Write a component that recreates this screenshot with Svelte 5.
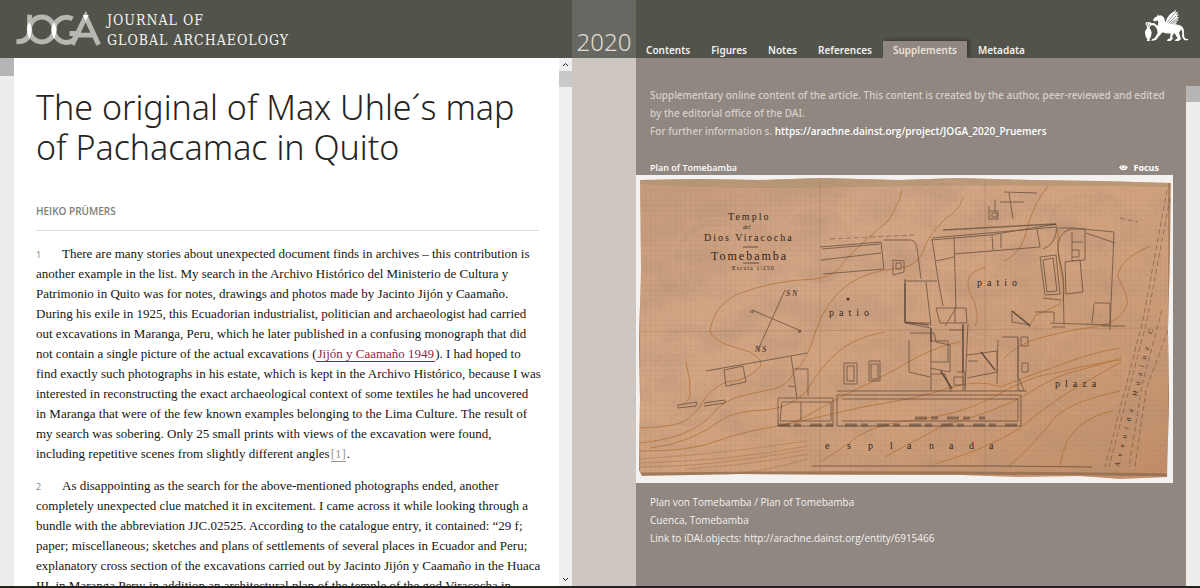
<script>
  const tabs = ['Contents', 'Figures', 'Notes', 'References', 'Supplements', 'Metadata'];
  let active = $state('Supplements');

  const first = [
    'There are many stories about unexpected document finds in archives – this contribution is',
    'another example in the list. My search in the Archivo Histórico del Ministerio de Cultura y',
    'Patrimonio in Quito was for notes, drawings and photos made by Jacinto Jijón y Caamaño.',
    'During his exile in 1925, this Ecuadorian industrialist, politician and archaeologist had carried',
    'out excavations in Maranga, Peru, which he later published in a confusing monograph that did'
  ];
  const middle = [
    'find exactly such photographs in his estate, which is kept in the Archivo Histórico, because I was',
    'interested in reconstructing the exact archaeological context of some textiles he had uncovered',
    'in Maranga that were of the few known examples belonging to the Lima Culture. The result of',
    'my search was sobering. Only 25 small prints with views of the excavation were found,'
  ];
  const second = [
    'As disappointing as the search for the above-mentioned photographs ended, another',
    'completely unexpected clue matched it in excitement. I came across it while looking through a',
    'bundle with the abbreviation JJC.02525. According to the catalogue entry, it contained: “29 f;',
    'paper; miscellaneous; sketches and plans of settlements of several places in Ecuador and Peru;',
    'explanatory cross section of the excavations carried out by Jacinto Jijón y Caamaño in the Huaca',
    'III, in Maranga Peru; in addition an architectural plan of the temple of the god Viracocha in'
  ];

  const contours = [
    'M710 330 Q714 305 738 294 Q775 280 815 279 Q838 276 845 260 Q870 235 887 222 Q899 205 902 190',
    'M710 330 Q712 340 728 345 L750 352 Q768 362 757 370 Q745 381 726 382 Q712 388 704 400 Q692 422 673 425 Q655 428 639 428',
    'M816 330 Q826 300 850 283 Q868 272 892 269 Q920 268 925 246 Q934 226 953 213 Q961 206 963 198',
    'M816 330 Q808 360 794 372 Q788 386 773 389 L745 395 Q722 400 712 415 Q690 438 640 443',
    'M639 451 Q690 452 720 440 Q750 430 773 427 Q800 422 817 410 Q845 394 870 383 Q895 370 921 355 Q945 344 960 342',
    'M885 332 Q855 337 838 352 Q820 367 806 392 Q790 408 765 410 Q735 411 723 419 Q690 444 650 448',
    'M780 426 Q840 412 867 406 Q920 398 945 389 Q980 378 1000 387 Q1030 375 1060 365 Q1090 353 1120 348',
    'M820 462 Q843 448 858 436 Q882 422 916 420 Q960 414 990 399 Q1030 375 1060 372 Q1085 365 1121 360',
    'M885 457 Q925 435 945 425 Q1000 410 1025 395 Q1060 373 1080 370 Q1105 363 1121 358',
    'M935 464 Q1003 444 1030 420 Q1056 400 1072 390 L1121 362',
    'M1008 467 Q1032 447 1056 416 Q1075 400 1120 391',
    'M1060 465 Q1065 436 1080 426 Q1095 414 1113 411',
    'M1004 261 Q1020 254 1025 236 Q1032 205 1048 186',
    'M1150 246 Q1118 260 1118 277 Q1130 300 1127 305 Q1121 321 1100 326 Q1040 335 1024 344 Q1007 353 1004 359',
    'M986 267 Q970 271 968 280 Q967 290 974 301 Q980 320 975 326',
    'M1058 230 Q1057 260 1063 280 Q1067 300 1058 305 L1035 316 L1029 328',
    'M686 362 Q691 380 690 397 Q688 402 682 405'
  ];
  const fineContours = [
    'M640 459 Q730 453 806 441', 'M640 463 Q730 461 808 446', 'M685 469 Q750 465 808 454',
    'M720 475 Q760 473 808 459', 'M640 467 Q710 467 805 450'
  ];
</script>

<div class="page">
  <header>
    <a class="brand" href="/" aria-label="Journal of Global Archaeology">
      <svg class="joga" viewBox="0 0 258 94" aria-hidden="true">
        <g fill="none" stroke="#b7b7b1" stroke-width="15">
          <path d="M40 2V52Q39 84 0 84" />
          <circle cx="77" cy="47" r="38" />
          <path d="M170 15A38 38 0 1 0 164 84Q175 81 185 59H161" />
          <path d="M169 93L210 8L249 93M185 64H233" />
        </g>
        <path d="M38 24Q47 36 46 48Q46 62 39 75Q32 60 32 47Q32 34 38 24ZM114 24Q121 37 121 48Q121 62 114 76Q106 60 106 48Q106 36 114 24ZM201 3H219L210 21Z" fill="#fff" />
      </svg>
      <span class="brand-name">JOURNAL OF<br />GLOBAL ARCHAEOLOGY</span>
    </a>
    <div class="year">2020</div>
    <div class="bar">
      <nav>
        {#each tabs as tab}
          <button class:active={active === tab} onclick={() => (active = tab)}>{tab}</button>
        {/each}
      </nav>
      <svg class="griffin" viewBox="0 0 180 132" aria-hidden="true">
        <g fill="#fff">
          <path d="M29 55H45L44 62Q40 66 41 73Q49 82 46 93Q44 102 40 106L42 111H32L34 106Q28 99 27 88Q27 79 33 73Q34 67 29 62Z" />
          <path d="M51 47Q55 39 65 36L64 31L70 35L75 34Q86 39 87 52Q92 59 99 57L118 61Q134 63 140 70Q146 78 144 90Q143 99 149 104L156 105V109H146Q136 101 139 91Q140 80 135 76Q134 82 129 86L135 105L128 111H117L118 107L125 103L115 87L109 95L110 106L103 111H93L95 106L102 103L104 88Q91 90 80 85L70 95L60 108L46 111L48 106L56 102L65 87L63 76L56 65L47 63L38 72L32 69L43 57L56 58L64 66L67 58L65 49L58 52L53 51Z" />
          <path d="M89 57Q92 38 104 29L121 17L117 27L127 23L120 34L129 30L122 40L129 39L123 47L128 48L119 54L124 56L114 61L99 74Q89 73 89 57Z" />
        </g>
        <path d="M94 55L116 28M98 58L120 36M103 59L123 43M108 60L122 50M35 57Q31 60 34 67M42 59L38 67" fill="none" stroke="#52534a" stroke-width="2" />
      </svg>
    </div>
  </header>

  <main>
    <div class="edge left"><i></i></div>
    <article>
      <div class="text">
        <h1>The original of Max Uhle´s map<br />of Pachacamac in Quito</h1>
        <p class="author">HEIKO PRÜMERS</p>
        <p class="para">
          <span class="num">1</span>{#each first as line}{line}<br />{/each}not contain a single picture of the actual excavations (<a class="cite" href="#jijon">Jijón y Caamaño 1949</a>). I had hoped to<br />{#each middle as line}{line}<br />{/each}including repetitive scenes from slightly different angles<a class="note" href="#note-1">[1]</a>.
        </p>
        <p class="para">
          <span class="num">2</span>{#each second as line}{line}<br />{/each}
        </p>
      </div>
      <div class="scroll" aria-hidden="true">
        <svg viewBox="0 0 13 13"><path d="M4 8L6.500 5.500L9 8" /></svg>
        <i></i>
        <svg class="down" viewBox="0 0 13 13"><path d="M4 5L6.500 7.500L9 5" /></svg>
      </div>
    </article>
    <div class="gutter"></div>
    <aside>
      <p class="intro">
        Supplementary online content of the article. This content is created by the author, peer-reviewed and edited by the editorial office of the DAI.<br />For further information s. <a href="https://arachne.dainst.org/project/JOGA_2020_Pruemers">https://arachne.dainst.org/project/JOGA_2020_Pruemers</a>
      </p>
      <div class="plan-head">
        <h2>Plan of Tomebamba</h2>
        <button>
          <svg viewBox="0 0 20 14" aria-hidden="true"><path d="M0 7Q4 1 10 1T20 7Q16 13 10 13T0 7Z" fill="#fff" /><circle cx="10" cy="6" r="4" fill="none" stroke="#8f8780" stroke-width="1.500" /></svg>Focus
        </button>
      </div>
      <svg class="map" viewBox="636 175 537 308" role="img" aria-label="Plan of Tomebamba">
        <defs>
          <linearGradient id="paper" x1="0" y1="0" x2="1" y2="1">
            <stop offset="0" stop-color="#c39a7b" />
            <stop offset=".3" stop-color="#d2a685" />
            <stop offset=".65" stop-color="#cf9f7b" />
            <stop offset="1" stop-color="#c08c67" />
          </linearGradient>
          <pattern id="grid" width="5" height="5" patternUnits="userSpaceOnUse">
            <path d="M0 0H5M0 0V5" stroke="#8a5a40" stroke-width=".5" opacity=".24" />
          </pattern>
          <filter id="grain" x="0" y="0" width="100%" height="100%">
            <feTurbulence type="fractalNoise" baseFrequency=".025 .04" numOctaves="5" seed="8" />
            <feColorMatrix values="0 0 0 0 .45  0 0 0 0 .28  0 0 0 0 .18  .9 0 0 0 -.32" />
          </filter>
          <clipPath id="sheet">
            <path d="M640 180L700 179L760 180L820 178L900 180L960 178L1030 180L1100 181L1171 183L1170 250L1168 330L1169 400L1167 477L1120 479L1080 476L1020 477L960 475L850 475L740 474L642 476L639 470L640 400L639 340L641 270Z" />
          </clipPath>
        </defs>
        <rect x="636" y="175" width="537" height="308" fill="#f4f2f1" />
        <g clip-path="url(#sheet)">
          <rect x="636" y="175" width="537" height="308" fill="url(#paper)" />
          <rect x="636" y="175" width="537" height="308" filter="url(#grain)" />
          <rect x="636" y="187" width="537" height="285" fill="url(#grid)" />
          <path d="M636 175H1173V187Q1000 184 860 187T636 184Z" fill="#b09373" opacity=".7" />
          <path d="M638 474Q800 472 960 473T1170 475" fill="none" stroke="#806044" stroke-width="3" opacity=".6" />
          <path d="M639 178V475M1169 183V478" stroke="#8b6a4d" stroke-width="2" opacity=".5" />
          <path d="M820 180V476M985 180V476M640 332L1168 328" stroke="#9a7358" stroke-width="1" opacity=".35" />
          <g fill="none" stroke="#e3bb99" stroke-width="2" opacity=".14">
            <circle cx="715" cy="260" r="42" /><circle cx="715" cy="260" r="32" />
            <circle cx="818" cy="245" r="40" /><circle cx="950" cy="225" r="44" />
            <circle cx="1082" cy="230" r="38" /><circle cx="1082" cy="230" r="30" />
            <circle cx="686" cy="385" r="43" /><circle cx="686" cy="385" r="34" />
            <circle cx="1085" cy="372" r="42" /><circle cx="970" cy="375" r="40" />
          </g>
          <g fill="none" stroke="#aa6425" stroke-width="1" opacity=".6">
            {#each contours as d}<path {d} />{/each}
          </g>
          <g fill="none" stroke="#a56c3a" stroke-width=".7" opacity=".6">
            {#each fineContours as d}<path {d} />{/each}
          </g>
          <g fill="none" stroke="#4d3b2e" stroke-width="1" opacity=".62">
            <path d="M820 247L881 242L884 269L823 274M821 260L881 253M822 249L880 244M884 240H911Q916 241 917 248L921 279M904 281H937M893 260L904 261V272L893 275ZM896 263H901V269H896Z" />
            <path d="M931 240L990 235L1057 224M932 239L938 279L943 306M954 237L956 308L945 326M954 254L1040 247M936 261L954 257M992 235L993 250M1001 234V248M1037 229L1040 247M1057 226Q1056 245 1043 249M932 238L1056 227" />
            <path d="M1058 228H1073L1114 232L1110 330M1070 229H1085V260L1072 261V232M1072 242H1083M1086 233L1115 243M1072 250H1079V257H1072M1040 257L1056 255L1060 294L1045 295ZM1043 260L1053 258L1057 291L1047 292ZM1065 262L1080 260L1083 292L1066 294ZM1070 229Q1056 234 1058 252L1063 275L1064 325M1043 298L1061 300M1094 303H1110M1094 304L1092 323M1110 303V325L1050 323M1012 311L1030 325L1012 322ZM1035 312H1054V322" />
            <path d="M905 279V323H930M926 282L931 326M905 323L931 328V391M910 333H934L936 342L950 345V372L930 368M909 340V372L930 377M930 341H948V362H931M931 374H945L951 392M940 371L952 388M963 323V391M968 324L965 389M936 308H966L967 323H940ZM955 308V323M949 330H963M957 372H965V391M954 377H963V385H954Z" />
            <path d="M967 355L997 351V372L967 378M981 352L995 370M1002 337H1018V374M1018 338V390L1024 391M1021 337H1028V346H1021ZM1022 363H1028V372H1022ZM1017 374L1024 390M968 361H978M998 340L997 384" />
            <path d="M837 391H1027M837 395H1021V426H837ZM842 399H1018V421H842M780 398H833V426H778V398ZM782 402H831V421H780ZM801 402V420M844 363H857V384H844ZM847 366H854V381H847ZM869 361H880V381H869ZM871 364H878V379H871Z" />
            <path d="M706 371L785 357L807 353M724 370L743 366L746 382L726 386ZM791 356L797 398M794 369H808V396M678 405L697 402L696 406L678 408ZM704 403L725 400V403L704 406M788 386L796 387" />
            <path d="M989 206V219H998V211H990M992 213H997V217H992ZM1004 192L1037 193M1009 193L1013 219M1000 202H1024M995 200V211" />
            <path d="M812 466L1000 466L1092 467M1102 326H1125M1052 327H1065M785 290L758 350M752 310L801 331" />
          </g>
          <path d="M905 283V322L929 325M931 328V342M963 325V372M941 371L952 389M981 352L995 370M1012 311L1030 326M943 230L1056 224" fill="none" stroke="#33271f" stroke-width="1.500" opacity=".5" />
          <g fill="none" stroke="#49392f" stroke-width="3" stroke-dasharray="12 4 7 9" opacity=".5"><path d="M778 425H838M845 425H1020M915 418H985" /></g>
          <g fill="none" stroke="#654a39" stroke-width=".8" stroke-dasharray="5 3" opacity=".65">
            <path d="M1167 190L1143 320L1105 467M1170 198L1147 320L1109 467M1162 310L1142 385L1129 467M1168 330L1146 390L1135 467M830 239L914 235M1120 218L1138 222" />
          </g>
          <g class="ink">
            <text x="728" y="220" font-size="10" letter-spacing="2">Templo</text>
            <text x="743" y="229" font-size="6" font-style="italic">del</text>
            <text x="704" y="241" font-size="10" letter-spacing="2">Dios Viracocha</text>
            <path d="M743 247H758M743 263H759" stroke="#33251d" stroke-width=".7" />
            <text x="711" y="260" font-size="12" letter-spacing="2">Tomebamba</text>
            <text x="732" y="270" font-size="6" letter-spacing="1">Escala 1:250</text>
            <text x="829" y="316" font-size="10" letter-spacing="5">patio</text>
            <text x="977" y="286" font-size="10" letter-spacing="5">patio</text>
            <text x="1055" y="387" font-size="10" letter-spacing="5">plaza</text>
            <text x="825 847 868 890 907 929 949 969 989" y="449" font-size="10">esplanada</text>
            <text transform="translate(1119 467) rotate(-76)" font-size="7" letter-spacing="6">Avenida Huaina C</text>
            <text x="786" y="296" font-size="8" font-style="italic">S N</text>
            <text x="755" y="352" font-size="8" font-style="italic">N S</text>
            <text x="750" y="313" font-size="7">o</text><text x="798" y="333" font-size="7">e</text>
          </g>
          <circle cx="848" cy="299" r="1.500" fill="#5c2d17" />
        </g>
      </svg>
      <p class="caption">
        Plan von Tomebamba / Plan of Tomebamba<br />Cuenca, Tomebamba<br />Link to iDAI.objects: <a href="http://arachne.dainst.org/entity/6915466">http://arachne.dainst.org/entity/6915466</a>
      </p>
    </aside>
    <div class="edge right"><i></i></div>
  </main>
</div>

<style>
  :global(body) { margin: 0; }
  .page {
    height: 100vh;
    box-sizing: border-box;
    display: flex;
    flex-direction: column;
    overflow: hidden;
    border-bottom: 2px solid #22221f;
    font-family: 'Noto Sans', 'Open Sans', sans-serif;
    font-size: 10px;
    background: #fff;
  }
  h1, h2, p { margin: 0; }
  button {
    border: 0;
    background: none;
    color: inherit;
    font: inherit;
    cursor: pointer;
  }
  a { color: inherit; text-decoration: none; }
  svg { display: block; }

  header {
    flex: none;
    height: 58px;
    display: grid;
    grid-template-columns: 14px minmax(0, 558fr) 64px minmax(0, 550fr) 14px;
    background: #52534a;
    color: #fff;
  }
  .brand {
    grid-column: 1 / 3;
    display: flex;
    align-items: flex-start;
    gap: 5px;
    padding: 10px 0 0 16px;
  }
  .joga { width: 86px; height: 31px; margin-top: 4px; overflow: visible; }
  .brand-name {
    font-family: 'DejaVu Serif Condensed', 'DejaVu Serif', serif;
    font-size: 14px;
    line-height: 20px;
    letter-spacing: 1px;
    color: #f3f3f0;
  }
  .year {
    display: flex;
    align-items: flex-end;
    justify-content: center;
    background: #676862;
    color: #e2ddd5;
    font-size: 24px;
    line-height: 32px;
    font-weight: 300;
  }
  .bar {
    grid-column: 4 / 6;
    display: flex;
    justify-content: space-between;
    align-items: flex-end;
  }
  nav { display: flex; gap: 1px; }
  nav button {
    height: 17px;
    padding: 0 10px;
    line-height: 16px;
    font-weight: 600;
    color: #f3f1ed;
  }
  nav .active { background: #8f8780; color: #e9e3da; box-shadow: 2px -1px 4px #33342f; clip-path: inset(-4px -5px 0 -2px); }
  .griffin { width: 60px; height: 44px; margin: 0 4px 10px 0; }

  main {
    flex: 1;
    min-height: 0;
    display: grid;
    grid-template-columns: 14px minmax(0, 558fr) 64px minmax(0, 550fr) 14px;
  }
  .edge { background: #ededed; }
  .edge i { display: block; height: 18px; background: #b5b5b5; }
  .right i { height: 16px; border-top: 28px solid #8f8780; }

  article { min-height: 0; display: flex; overflow: hidden; }
  .text { flex: 1; min-width: 0; padding: 29px 20px 0 22px; }
  h1 {
    font-size: 34px;
    line-height: 40px;
    font-weight: 300;
    color: #24241e;
    white-space: nowrap;
  }
  .author {
    margin: 35px 0 13px;
    padding-bottom: 10px;
    border-bottom: 1px solid #dedbd3;
    font-family: 'Open Sans', 'Noto Sans', sans-serif;
    line-height: 18px;
    font-weight: 600;
    color: #7c7c78;
  }
  .para {
    margin-bottom: 12px;
    font-family: 'Liberation Serif', serif;
    font-size: 13px;
    line-height: 20px;
    color: #161612;
    white-space: nowrap;
  }
  .num {
    display: inline-block;
    width: 26px;
    font-family: 'Noto Sans', sans-serif;
    font-size: 9px;
    line-height: 16px;
    color: #8b8b86;
  }
  .cite { color: #8e2646; border-bottom: 1px solid #8e2646; padding: 0 1px; }
  .note { color: #999690; border-bottom: 1px solid #999690; margin: 0 1px; }

  .scroll { width: 13px; display: flex; flex-direction: column; background: #efefef; }
  .scroll svg { width: 13px; height: 13px; fill: none; stroke: #222; stroke-width: 1; }
  .scroll i { height: 16px; background: #c9c9c9; }
  .scroll .down { margin-top: auto; }

  .gutter { background: #cec6c0; }

  aside { background: #8f8780; color: #f4f2ef; min-height: 0; overflow: hidden; }
  .intro { padding: 28px 14px 0; line-height: 18px; font-weight: 500; color: #d6d1cb; }
  .intro a { color: #fff; font-family: 'Open Sans', 'Noto Sans', sans-serif; font-weight: 600; }
  .plan-head {
    display: flex;
    justify-content: space-between;
    align-items: center;
    padding: 20px 14px 0;
    margin-right: 13px;
    font-family: 'Open Sans', 'Noto Sans', sans-serif;
    font-size: 9px;
    line-height: 15px;
    font-weight: 700;
    color: #fff;
  }
  .plan-head h2 { font-size: 9px; font-weight: 600; }
  .plan-head button { display: flex; align-items: center; gap: 5px; padding: 0; }
  .plan-head button svg { width: 9px; height: 7px; }
  .map { width: calc(100% - 13px); height: auto; }
  .ink { fill: #33251d; font-family: 'Liberation Serif', serif; }
  .caption { padding: 10px 14px 0; font-family: 'Open Sans', 'Noto Sans', sans-serif; line-height: 18px; }
</style>
